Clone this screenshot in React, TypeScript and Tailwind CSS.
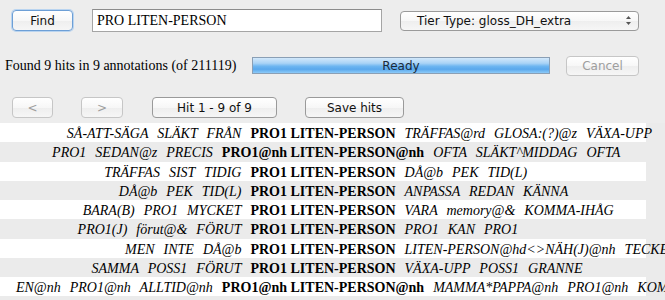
import React from "react";

const ui = "font-['DejaVu_Sans','Liberation_Sans',sans-serif] text-[12px]";
const serif = "font-['Liberation_Serif','Times_New_Roman',serif]";

const hits = [
  ["SÅ-ATT-SÄGA  SLÄKT  FRÅN", "PRO1 LITEN-PERSON", "TRÄFFAS@rd  GLOSA:(?)@z  VÄXA-UPP"],
  ["PRO1  SEDAN@z  PRECIS", "PRO1@nh LITEN-PERSON@nh", "OFTA  SLÄKT^MIDDAG  OFTA"],
  ["TRÄFFAS  SIST  TIDIG", "PRO1 LITEN-PERSON", "DÅ@b  PEK  TID(L)"],
  ["DÅ@b  PEK  TID(L)", "PRO1 LITEN-PERSON", "ANPASSA  REDAN  KÄNNA"],
  ["BARA(B)  PRO1  MYCKET", "PRO1 LITEN-PERSON", "VARA  memory@&  KOMMA-IHÅG"],
  ["PRO1(J)  förut@&  FÖRUT", "PRO1 LITEN-PERSON", "PRO1  KAN  PRO1"],
  ["MEN  INTE  DÅ@b", "PRO1 LITEN-PERSON", "LITEN-PERSON@hd<>NÄH(J)@nh  TECKEN"],
  ["SAMMA  POSS1  FÖRUT", "PRO1 LITEN-PERSON", "VÄXA-UPP  POSS1  GRANNE"],
  ["EN@nh  PRO1@nh  ALLTID@nh", "PRO1@nh LITEN-PERSON@nh", "MAMMA*PAPPA@nh  PRO1@nh  KOMMA"],
];

function AquaButton({
  label,
  className,
  disabled,
  primary,
}: {
  label: string;
  className: string;
  disabled?: boolean;
  primary?: boolean;
}) {
  return (
    <div
      className={`${className} ${ui} flex items-center justify-center rounded-[4px] border ${
        primary
          ? "border-[#6d9fd6] shadow-[0_0_0_1px_#b9d4f0]"
          : disabled
          ? "border-[#c6c6c6]"
          : "border-[#9a9a9a]"
      } bg-[linear-gradient(to_bottom,#ffffff_0%,#f7f7f7_50%,#eeeeee_51%,#f6f6f6_100%)] ${
        disabled ? "text-[#9e9e9e]" : "text-[#111]"
      }`}
    >
      {label}
    </div>
  );
}

export default function App() {
  return (
    <div className="flex h-[300px] w-[665px] flex-col overflow-hidden bg-[#ededed]">
      <div className="flex items-center pl-[12px] pt-[9px]">
        <AquaButton label="Find" primary className="h-[21px] w-[61px]" />
        <div
          className={`ml-[19px] flex h-[23px] w-[290px] items-center border border-[#a5a5a5] border-t-[#8c8c8c] bg-white pl-[4px] text-[14px] text-black ${serif}`}
        >
          PRO LITEN-PERSON
        </div>
        <div
          className={`ml-[18px] flex h-[20px] w-[239px] items-center rounded-[4px] border border-[#9a9a9a] bg-[linear-gradient(to_bottom,#ffffff_0%,#f7f7f7_50%,#eeeeee_51%,#f6f6f6_100%)] pl-[16px] pr-[6px] text-[#111] ${ui}`}
        >
          <span className="grow">Tier Type: gloss_DH_extra</span>
          <svg width="7" height="11" viewBox="0 0 7 11">
            <path d="M3.5 1 L6 4 L1 4 Z" fill="#555" />
            <path d="M3.5 10 L6 7 L1 7 Z" fill="#555" />
          </svg>
        </div>
      </div>

      <div className="mt-[23px] flex items-center pl-[5px]">
        <span className={`w-[247px] text-[14px] text-black ${serif}`}>
          Found 9 hits in 9 annotations (of 211119)
        </span>
        <div
          className={`flex h-[17px] w-[298px] items-center justify-center border border-[#8a9fb5] bg-[linear-gradient(to_bottom,#d2e8fb_0%,#a9d3f6_35%,#6db6f1_55%,#5aa8ec_75%,#8ccaf8_100%)] text-[#1a2a3a] ${ui}`}
        >
          Ready
        </div>
        <AquaButton label="Cancel" disabled className="ml-[16px] h-[20px] w-[73px]" />
      </div>

      <div className="mt-[21px] flex items-center pl-[12px]">
        <AquaButton label="<" disabled className="h-[21px] w-[41px]" />
        <AquaButton label=">" disabled className="ml-[28px] h-[21px] w-[42px]" />
        <AquaButton label="Hit 1 - 9 of 9" className="ml-[29px] h-[21px] w-[125px]" />
        <AquaButton label="Save hits" className="ml-[28px] h-[21px] w-[99px]" />
      </div>

      <div className={`mt-[5px] flex grow flex-col bg-[#ebebeb] text-[14px] text-black ${serif}`}>
        {hits.map((h, i) => (
          <div
            key={i}
            className={`grid h-[19.25px] w-[646px] grid-cols-[minmax(0,1fr)_auto_minmax(0,1fr)] items-center gap-x-[9px] whitespace-pre ${
              i % 2 === 0 ? "bg-white" : "bg-[#ebebeb]"
            }`}
          >
            <span className="text-right italic [word-spacing:1px]">{h[0]}</span>
            <span className="font-bold">{h[1]}</span>
            <span className="italic [word-spacing:1px]">{h[2]}</span>
          </div>
        ))}
      </div>
    </div>
  );
}
